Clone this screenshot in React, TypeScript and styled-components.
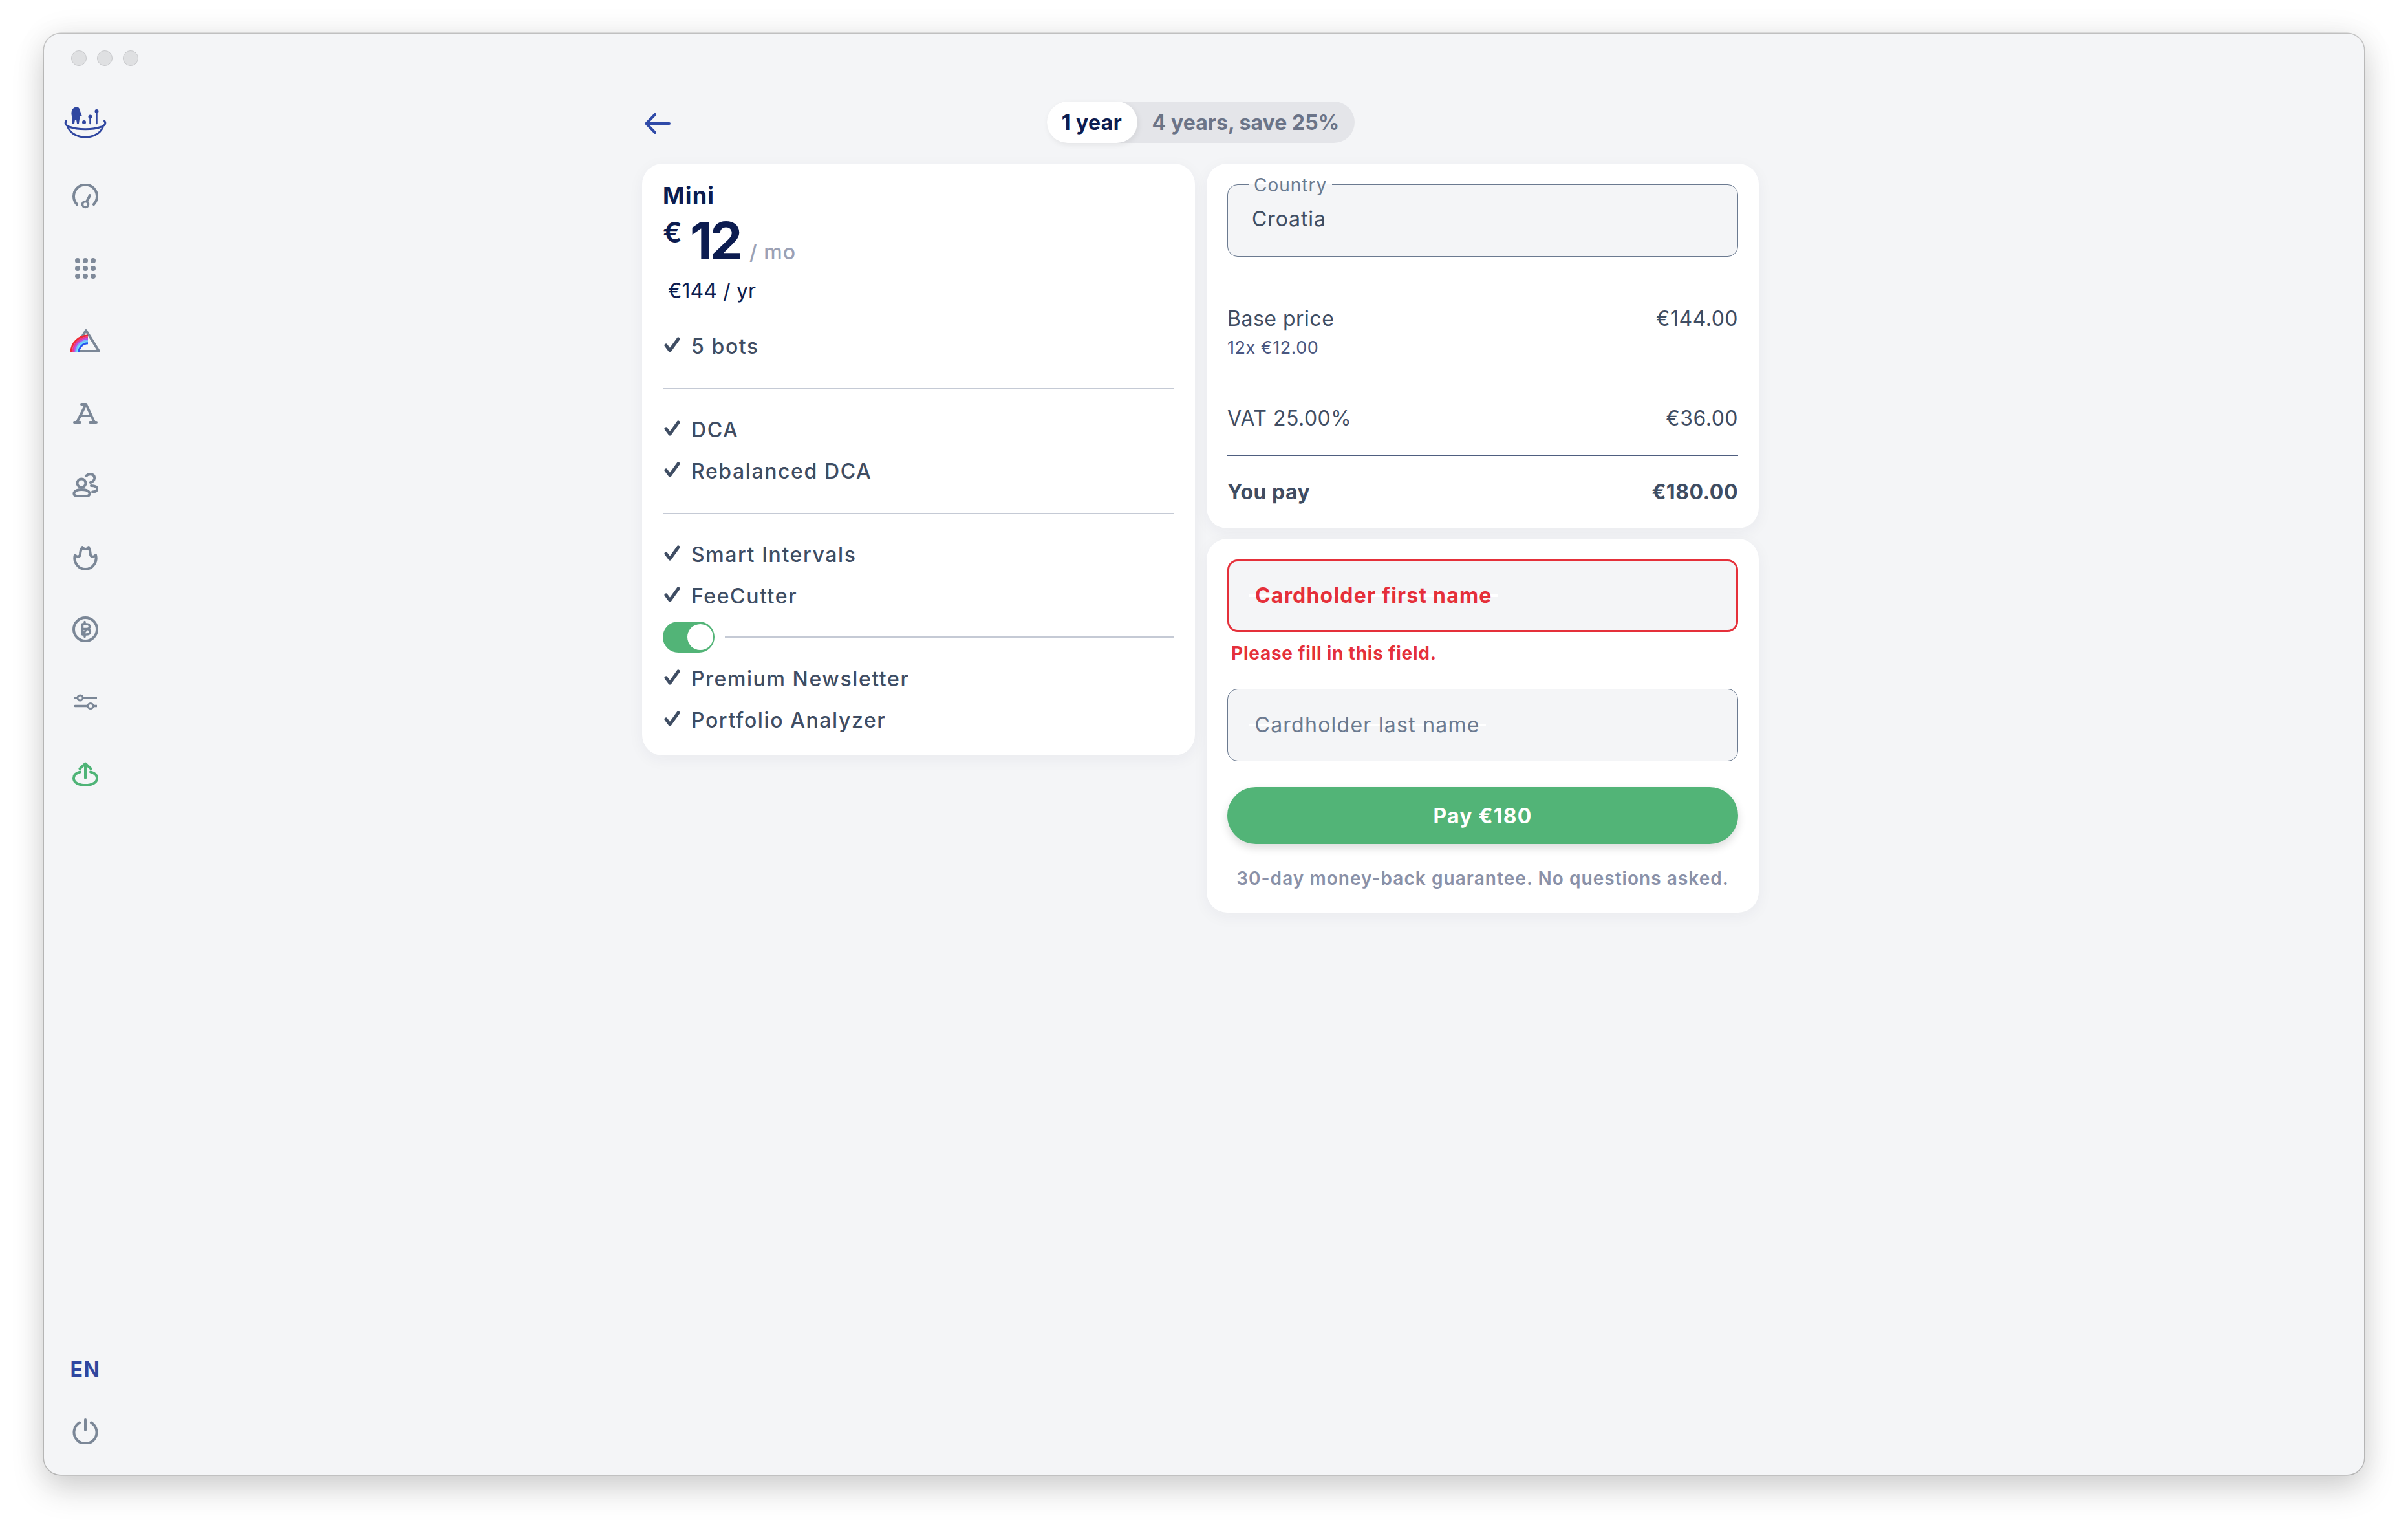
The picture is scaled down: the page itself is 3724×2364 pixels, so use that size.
import React from "react";
import styled, { createGlobalStyle } from "styled-components";

const Global = createGlobalStyle`
  html, body { margin: 0; padding: 0; background: #fff; }
  body { font-family: Inter, "Noto Sans", "Liberation Sans", sans-serif; }
  * { box-sizing: border-box; }
`;

const Page = styled.div`
  width: 3724px;
  height: 2364px;
  padding: 52px 68px 84px;
`;
const Window = styled.div`
  width: 3588px;
  height: 2228px;
  background: #f4f5f7;
  border-radius: 26px;
  box-shadow: 0 0 0 1.5px rgba(0,0,0,.2), 0 22px 50px rgba(0,0,0,.17), 0 0 50px rgba(0,0,0,.07);
  display: flex;
  flex-direction: column;
`;
const TitleBar = styled.div`
  height: 76px;
  flex: none;
  display: flex;
  gap: 16px;
  padding: 26px 0 0 42px;
`;
const Light = styled.span`
  width: 24px;
  height: 24px;
  border-radius: 50%;
  background: #dfe0e2;
  border: 1px solid #c8c9cc;
`;
const Body = styled.div`
  flex: 1;
  display: flex;
  min-height: 0;
`;
const Sidebar = styled.nav`
  width: 128px;
  flex: none;
  display: flex;
  flex-direction: column;
  align-items: center;
  padding-bottom: 27px;
`;
const LogoSlot = styled.div`
  height: 120px;
  display: flex;
  align-items: center;
`;
const NavSlot = styled.div`
  height: 111.6px;
  display: flex;
  align-items: center;
`;
const Footer = styled.div`
  margin-top: auto;
  display: flex;
  flex-direction: column;
  gap: 16px;
  align-items: center;
`;
const FootSlot = styled.div`
  height: 80px;
  display: flex;
  align-items: center;
`;
const Lang = styled.span`
  font-size: 32px;
  font-weight: 700;
  letter-spacing: 1.5px;
  color: #2f46a0;
`;
const Main = styled.main`
  flex: 1;
  padding: 29px 0 0 797px;
`;
const Content = styled.div`
  width: 1727px;
`;
const TopRow = styled.div`
  display: grid;
  grid-template-columns: 1fr auto 1fr;
  align-items: center;
  height: 64px;
  margin-bottom: 32px;
`;
const Back = styled.div`
  margin: 4px 0 0 4px;
  display: flex;
`;
const Segment = styled.div`
  width: 476px;
  height: 64px;
  border-radius: 32px;
  background: #e4e5e9;
  display: flex;
`;
const SegOn = styled.div`
  width: 140px;
  height: 64px;
  border-radius: 32px;
  background: #fff;
  box-shadow: 2px 3px 10px rgba(0,0,0,.07);
  color: #0c1c50;
  font-size: 32px;
  font-weight: 700;
  letter-spacing: .4px;
  display: flex;
  align-items: center;
  justify-content: center;
`;
const SegOff = styled.div`
  flex: 1;
  color: #6b7488;
  font-size: 32px;
  font-weight: 700;
  letter-spacing: .08px;
  display: flex;
  align-items: center;
  justify-content: center;
`;
const Columns = styled.div`
  display: grid;
  grid-template-columns: 855px 854px;
  column-gap: 18px;
  align-items: start;
`;
const Card = styled.section`
  background: #fff;
  border-radius: 32px;
  box-shadow: 0 6px 24px rgba(30,40,70,.05);
`;
const PlanCard = styled(Card)`
  padding: 27px 32px 23px;
`;
const RightStack = styled.div`
  display: flex;
  flex-direction: column;
  gap: 16px;
`;
const SummaryCard = styled(Card)`
  padding: 14px 32px 36px;
`;
const PayCard = styled(Card)`
  padding: 32px 32px 35px;
`;
const PlanName = styled.h2`
  margin: 0;
  font-size: 36px;
  line-height: 44px;
  font-weight: 700;
  letter-spacing: 1.2px;
  color: #0c1c50;
`;
const PriceRow = styled.div`
  display: flex;
  align-items: baseline;
  height: 84px;
  margin-top: 6px;
  color: #0c1c50;
`;
const Currency = styled.span`
  font-size: 44px;
  line-height: 44px;
  font-weight: 600;
  align-self: flex-start;
  margin-top: 7px;
  width: 42px;
`;
const Amount = styled.span`
  font-size: 80px;
  line-height: 84px;
  font-weight: 700;
  letter-spacing: -3.5px;
`;
const Per = styled.span`
  font-size: 32px;
  font-weight: 500;
  letter-spacing: 1px;
  color: #9aa1b5;
  margin-left: 14px;
`;
const Yearly = styled.div`
  margin: 16px 0 33px 8px;
  font-size: 32px;
  line-height: 40px;
  font-weight: 400;
  letter-spacing: .1px;
  color: #0c1c50;
`;
const Feature = styled.div`
  height: 64px;
  display: flex;
  align-items: center;
  gap: 15px;
  font-size: 32px;
  font-weight: 500;
  letter-spacing: 1.6px;
  color: #3f4d63;
`;
const Check = styled.svg`
  width: 28px;
  height: 28px;
  flex: none;
  margin: -4px 0 0 1px;
`;
const Rule = styled.hr`
  border: 0;
  height: 2px;
  background: #c5cad5;
  margin: 33px 0 30px;
`;
const ToggleRow = styled.div`
  display: flex;
  align-items: center;
  gap: 16px;
  height: 48px;
  margin: 8px 0;
`;
const Toggle = styled.div`
  width: 80px;
  height: 48px;
  border-radius: 24px;
  background: #52b477;
  padding: 4px 2px;
  display: flex;
  justify-content: flex-end;
  flex: none;
`;
const Knob = styled.span`
  width: 40px;
  height: 40px;
  border-radius: 50%;
  background: #fff;
`;
const ToggleLine = styled.div`
  flex: 1;
  height: 2px;
  background: #c5cad5;
`;
const CountryField = styled.fieldset`
  margin: 0;
  padding: 0 32px;
  min-width: 0;
  height: 130px;
  background: #f4f5f7;
  border: 1.5px solid #6b7a90;
  border-radius: 16px;
`;
const CountryLegend = styled.legend`
  padding: 2px 8px 0;
  height: 36px;
  font-size: 28px;
  line-height: 34px;
  letter-spacing: 1px;
  color: #6b7a90;
`;
const CountryValue = styled.div`
  margin: 16px 0 0 5px;
  font-size: 32px;
  line-height: 40px;
  letter-spacing: .9px;
  color: #3f4d63;
`;
const Line = styled.div<{ $top: number; $bold?: boolean }>`
  display: flex;
  justify-content: space-between;
  margin-top: ${(p) => p.$top}px;
  font-size: 32px;
  line-height: 40px;
  letter-spacing: .5px;
  font-weight: ${(p) => (p.$bold ? 700 : 400)};
  color: #3f4d63;
`;
const SubLine = styled.div`
  margin-top: 7px;
  font-size: 27px;
  line-height: 36px;
  letter-spacing: .5px;
  color: #4a5680;
`;
const TotalRule = styled.hr`
  border: 0;
  height: 2px;
  background: #4f5f80;
  margin: 36px 0 0;
`;
const InputBox = styled.div<{ $error?: boolean }>`
  height: 112px;
  background: #f4f5f7;
  border-radius: 16px;
  border: ${(p) => (p.$error ? "3px solid #e5303a" : "1.5px solid #6b7a90")};
  padding-left: ${(p) => (p.$error ? 31 : 32.5)}px;
  display: flex;
  align-items: center;
`;
const InputLabel = styled.span<{ $error?: boolean }>`
  padding: 0 9px;
  font-size: 32px;
  line-height: 40px;
  letter-spacing: ${(p) => (p.$error ? "1.2px" : "1.25px")};
  font-weight: ${(p) => (p.$error ? 700 : 400)};
  color: ${(p) => (p.$error ? "#e5303a" : "#6b7a90")};
  background: linear-gradient(transparent 46%, #fff 46%, #fff 54%, transparent 54%);
`;
const ErrorText = styled.div`
  height: 36px;
  margin: 15px 0 37px 6px;
  font-size: 28px;
  line-height: 36px;
  font-weight: 700;
  letter-spacing: .75px;
  color: #e5303a;
`;
const PayButton = styled.button`
  display: block;
  width: 100%;
  height: 88px;
  margin-top: 40px;
  border: 0;
  border-radius: 44px;
  background: #52b477;
  box-shadow: 0 6px 14px rgba(0,0,0,.14);
  color: #fff;
  font-family: inherit;
  font-size: 32px;
  font-weight: 700;
  letter-spacing: 1.2px;
`;
const Guarantee = styled.div`
  margin-top: 35px;
  text-align: center;
  font-size: 28px;
  line-height: 36px;
  font-weight: 600;
  letter-spacing: 1.05px;
  color: #8a91a8;
`;
const NavIcon = styled.svg`
  display: block;
  fill: none;
  stroke: ${(p) => p.color || "#7b8797"};
  stroke-width: 4;
  stroke-linecap: round;
  stroke-linejoin: round;
`;

const CheckMark = () => (
  <Check viewBox="0 0 28 28" fill="none" stroke="#3f4d63" strokeWidth="5" strokeLinecap="round" strokeLinejoin="round">
    <path d="M4 15l6 8L23 5" />
  </Check>
);

const features = {
  a: ["5 bots"],
  b: ["DCA", "Rebalanced DCA"],
  c: ["Smart Intervals", "FeeCutter"],
  d: ["Premium Newsletter", "Portfolio Analyzer"],
};

const FeatureList = ({ items }: { items: string[] }) => (
  <>
    {items.map((t) => (
      <Feature key={t}>
        <CheckMark />
        {t}
      </Feature>
    ))}
  </>
);

const rainbow: [number, string][] = [
  [26, "#ee2a35"],
  [23.2, "#ea3a8c"],
  [20.8, "#b254e8"],
  [18.4, "#7fb4f8"],
  [16.2, "#6fe6fb"],
  [14.2, "#2a55ee"],
];

export default function App() {
  return (
    <Page>
      <Global />
      <Window>
        <TitleBar>
          <Light />
          <Light />
          <Light />
        </TitleBar>
        <Body>
          <Sidebar>
            <LogoSlot>
              <svg width="72" height="64" viewBox="0 0 72 64" fill="none" stroke="#2f46a0" strokeLinecap="round">
                <path fill="#2f46a0" stroke="none" d="M16 35L15.5 25C13 18 15 10 22 9.5C26 9 28 13 28 16L31 24L28 23L27 28L26 35L23 35L22 29L20 29L19 35Z" />
                <circle cx="34" cy="33" r="3" fill="#2f46a0" stroke="none" />
                <circle cx="43.5" cy="24.5" r="3" fill="#2f46a0" stroke="none" />
                <circle cx="53.5" cy="16" r="3" fill="#2f46a0" stroke="none" />
                <path strokeWidth="2.5" d="M43.5 26V35M53.5 18V35" />
                <path strokeWidth="3" d="M6.5 31C3.5 35 6 38 11 40C25 45 47 45 61 40C66 38 68.5 35 65.5 31" />
                <path strokeWidth="3" d="M9 41C14 52 26 56 36 56C46 56 58 52 63 41" />
              </svg>
            </LogoSlot>
            <NavSlot>
              <NavIcon width="40" height="38" viewBox="0 0 40 38">
                <path d="M7 31A18 18 0 1 1 33 31" />
                <circle cx="20" cy="31" r="4.5" strokeWidth="3.5" />
                <path d="M22.5 26L27 17" />
              </NavIcon>
            </NavSlot>
            <NavSlot>
              <svg width="32" height="32" viewBox="0 0 32 32" fill="#7f8a9a">
                {[4, 16, 28].flatMap((y) =>
                  [4, 16, 28].map((x) => <circle key={`${x}-${y}`} cx={x} cy={y} r="4" />)
                )}
              </svg>
            </NavSlot>
            <NavSlot>
              <NavIcon width="48" height="38" viewBox="0 0 48 38">
                <path d="M25 3L45 35H5Z" strokeLinejoin="round" />
                {rainbow.map(([r, c]) => (
                  <path
                    key={c}
                    stroke={c}
                    strokeLinecap="butt"
                    strokeWidth="3"
                    d={`M${28 - r} 37A${r} ${r} 0 0 1 28 ${37 - r}`}
                  />
                ))}
              </NavIcon>
            </NavSlot>
            <NavSlot>
              <NavIcon width="38" height="34" viewBox="0 0 38 34">
                <path d="M13 3H20L33 31M20 3L6 31M11 21H27M2 31H11M26 31H36" />
              </NavIcon>
            </NavSlot>
            <NavSlot>
              <NavIcon width="40" height="38" viewBox="0 0 40 38">
                <circle cx="14" cy="16" r="6.5" />
                <path d="M7 36C3 36 1.500 33 3 30C5 27 9 26 14 26C19 26 24 27 26 30C27.500 33 26 36 22 36Z" />
                <path d="M21 5C26 0 35 2 34 9C33.500 12 31 14 28 15M29 20C35 20 39 22 38 26C37 29 34 29.500 31 29.500" />
              </NavIcon>
            </NavSlot>
            <NavSlot>
              <NavIcon width="40" height="40" viewBox="0 0 40 40">
                <path d="M4 16C1 27 9 38 20 38C31 38 39 27 36 16C34 19 30 20 28 16C28 10 26 6 25 4C23 8 18 8 15.500 4C14 6 12 11 12 16C10 20 6 19 4 16Z" />
              </NavIcon>
            </NavSlot>
            <NavSlot>
              <NavIcon width="40" height="40" viewBox="0 0 40 40">
                <circle cx="20" cy="20" r="18" />
                <path strokeWidth="3.500" d="M15.500 12H22.500C28 12 28 19.500 22.500 19.500H15.500M22.500 19.500C29 19.500 29 28 22.500 28H15.500ZM15.500 12V28M19 8.500V12M19 28V31.500" />
              </NavIcon>
            </NavSlot>
            <NavSlot>
              <NavIcon width="36" height="26" viewBox="0 0 36 26" strokeWidth="3.500">
                <path strokeWidth="3.500" d="M2 7H36M2 19.500H36" />
                <circle cx="10" cy="7" r="4" fill="#f4f5f7" strokeWidth="3" />
                <circle cx="26" cy="19.500" r="4" fill="#f4f5f7" strokeWidth="3" />
              </NavIcon>
            </NavSlot>
            <NavSlot>
              <NavIcon width="40" height="38" viewBox="0 0 40 38" color="#4fb477">
                <path d="M12 15.500C5 17 2 20 2 25.500C2 32 10 36 20 36C30 36 38 32 38 25.500C38 20 35 17 28 15.500" />
                <path d="M20 3V25M11.500 10.500L20 2.500L28.500 10.500" />
              </NavIcon>
            </NavSlot>
            <Footer>
              <FootSlot>
                <Lang>EN</Lang>
              </FootSlot>
              <FootSlot>
                <NavIcon width="40" height="40" viewBox="0 0 40 40">
                  <path d="M11 6.500A17.500 17.500 0 1 0 29 6.500" />
                  <path d="M20 2V18" />
                </NavIcon>
              </FootSlot>
            </Footer>
          </Sidebar>
          <Main>
            <Content>
              <TopRow>
                <Back>
                  <svg width="40" height="32" viewBox="0 0 40 32" fill="none" stroke="#2f4aa8" strokeWidth="4" strokeLinecap="round" strokeLinejoin="round">
                    <path d="M38 16H3M16 2L2.500 16L16 30" />
                  </svg>
                </Back>
                <Segment>
                  <SegOn>1 year</SegOn>
                  <SegOff>4 years, save 25%</SegOff>
                </Segment>
                <span />
              </TopRow>
              <Columns>
                <PlanCard>
                  <PlanName>Mini</PlanName>
                  <PriceRow>
                    <Currency>€</Currency>
                    <Amount>12</Amount>
                    <Per>/ mo</Per>
                  </PriceRow>
                  <Yearly>€144 / yr</Yearly>
                  <FeatureList items={features.a} />
                  <Rule />
                  <FeatureList items={features.b} />
                  <Rule />
                  <FeatureList items={features.c} />
                  <ToggleRow>
                    <Toggle>
                      <Knob />
                    </Toggle>
                    <ToggleLine />
                  </ToggleRow>
                  <FeatureList items={features.d} />
                </PlanCard>
                <RightStack>
                  <SummaryCard>
                    <CountryField>
                      <CountryLegend>Country</CountryLegend>
                      <CountryValue>Croatia</CountryValue>
                    </CountryField>
                    <Line $top={76}>
                      <span>Base price</span>
                      <span>€144.00</span>
                    </Line>
                    <SubLine>12x €12.00</SubLine>
                    <Line $top={71}>
                      <span>VAT 25.00%</span>
                      <span>€36.00</span>
                    </Line>
                    <TotalRule />
                    <Line $top={36} $bold>
                      <span>You pay</span>
                      <span>€180.00</span>
                    </Line>
                  </SummaryCard>
                  <PayCard>
                    <InputBox $error>
                      <InputLabel $error>Cardholder first name</InputLabel>
                    </InputBox>
                    <ErrorText>Please fill in this field.</ErrorText>
                    <InputBox>
                      <InputLabel>Cardholder last name</InputLabel>
                    </InputBox>
                    <PayButton>Pay €180</PayButton>
                    <Guarantee>30-day money-back guarantee. No questions asked.</Guarantee>
                  </PayCard>
                </RightStack>
              </Columns>
            </Content>
          </Main>
        </Body>
      </Window>
    </Page>
  );
}
